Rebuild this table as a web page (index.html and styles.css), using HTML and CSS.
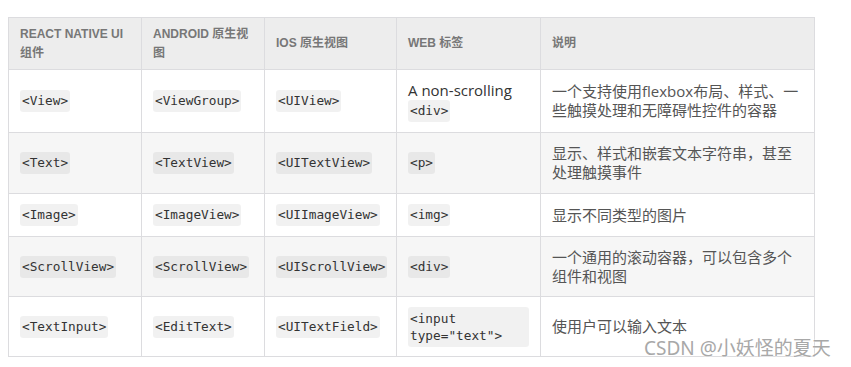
FILE: index.html
```html
<!DOCTYPE html>
<html lang="zh-CN">
<head>
  <meta charset="UTF-8" />
  <meta name="viewport" content="width=device-width, initial-scale=1.0" />
  <title>React Native 核心组件</title>
  <link rel="stylesheet" href="styles.css">
</head>
<body>
  <div class="page">
    <!-- Core components compared with native views -->
    <table class="compare">
      <colgroup>
        <col class="c1"><col class="c2"><col class="c3"><col class="c4"><col class="c5">
      </colgroup>
      <thead>
        <tr>
          <th>React Native UI 组件</th>
          <th>Android 原生视图</th>
          <th>iOS 原生视图</th>
          <th>Web 标签</th>
          <th>说明</th>
        </tr>
      </thead>
      <tbody>
        <tr class="r1">
          <td><code>&lt;View&gt;</code></td>
          <td><code>&lt;ViewGroup&gt;</code></td>
          <td><code>&lt;UIView&gt;</code></td>
          <td>A non-scrolling <code>&lt;div&gt;</code></td>
          <td class="desc">一个支持使用flexbox布局、样式、一些触摸处理和无障碍性控件的容器</td>
        </tr>
        <tr class="r2">
          <td><code>&lt;Text&gt;</code></td>
          <td><code>&lt;TextView&gt;</code></td>
          <td><code>&lt;UITextView&gt;</code></td>
          <td><code>&lt;p&gt;</code></td>
          <td class="desc">显示、样式和嵌套文本字符串，甚至处理触摸事件</td>
        </tr>
        <tr class="r3">
          <td><code>&lt;Image&gt;</code></td>
          <td><code>&lt;ImageView&gt;</code></td>
          <td><code>&lt;UIImageView&gt;</code></td>
          <td><code>&lt;img&gt;</code></td>
          <td class="desc">显示不同类型的图片</td>
        </tr>
        <tr class="r4">
          <td><code>&lt;ScrollView&gt;</code></td>
          <td><code>&lt;ScrollView&gt;</code></td>
          <td><code>&lt;UIScrollView&gt;</code></td>
          <td><code>&lt;div&gt;</code></td>
          <td class="desc">一个通用的滚动容器，可以包含多个组件和视图</td>
        </tr>
        <tr class="r5">
          <td><code>&lt;TextInput&gt;</code></td>
          <td><code>&lt;EditText&gt;</code></td>
          <td><code>&lt;UITextField&gt;</code></td>
          <td><code class="wide">&lt;input type="text"&gt;</code></td>
          <td class="desc">使用户可以输入文本</td>
        </tr>
      </tbody>
    </table>
    <div class="watermark">CSDN @小妖怪的夏天</div>
  </div>
</body>
</html>
```

FILE: styles.css
```css
* {
  margin: 0;
  padding: 0;
  box-sizing: border-box;
}
body {
  background: #fff;
  font-family: 'Open Sans', 'Noto Sans CJK SC', sans-serif;
  color: #333;
}
.page {
  position: relative;
  width: 851px;
  height: 367px;
  padding: 17px 0 0 8px;
}
/* Table */
.compare {
  border-collapse: collapse;
  table-layout: fixed;
  width: 806px;
}
.c1 { width: 133px; }
.c2 { width: 123px; }
.c3 { width: 132px; }
.c4 { width: 144px; }
.c5 { width: 274px; }
.compare th,
.compare td {
  border: 1px solid #dcdcdf;
  text-align: left;
  vertical-align: middle;
  padding: 0 11px;
}
.compare th {
  background: #ededed;
  height: 52px;
  font-family: 'Liberation Sans', 'Noto Sans CJK SC', sans-serif;
  font-size: 12px;
  font-weight: bold;
  line-height: 19px;
  color: #777;
  text-transform: uppercase;
}
.compare td {
  font-size: 15px;
  line-height: 19px;
}
.r1 td { height: 63px; }
.r2 td { height: 61px; }
.r3 td { height: 43px; }
.r4 td { height: 60px; }
.r5 td { height: 60px; }
.r2 td,
.r4 td {
  background: #f6f6f6;
}
.desc {
  font-size: 14px;
  line-height: 21px;
  color: #555;
}
code {
  display: inline-block;
  font-family: 'DejaVu Sans Mono', monospace;
  font-size: 12.75px;
  line-height: 22px;
  padding: 0 2px;
  border-radius: 3px;
  background: rgba(0, 0, 0, 0.055);
  color: #333;
  vertical-align: middle;
}
code.wide {
  display: block;
  line-height: 17px;
  padding: 3px 2px;
}
/* Watermark */
.watermark {
  position: absolute;
  left: 644px;
  top: 333px;
  font-family: 'Noto Sans', 'Noto Sans CJK SC', sans-serif;
  font-size: 19px;
  color: #a8a8a8;
  text-shadow: 0 0 2px #fff, 0 0 1px #fff;
  white-space: nowrap;
}
```
